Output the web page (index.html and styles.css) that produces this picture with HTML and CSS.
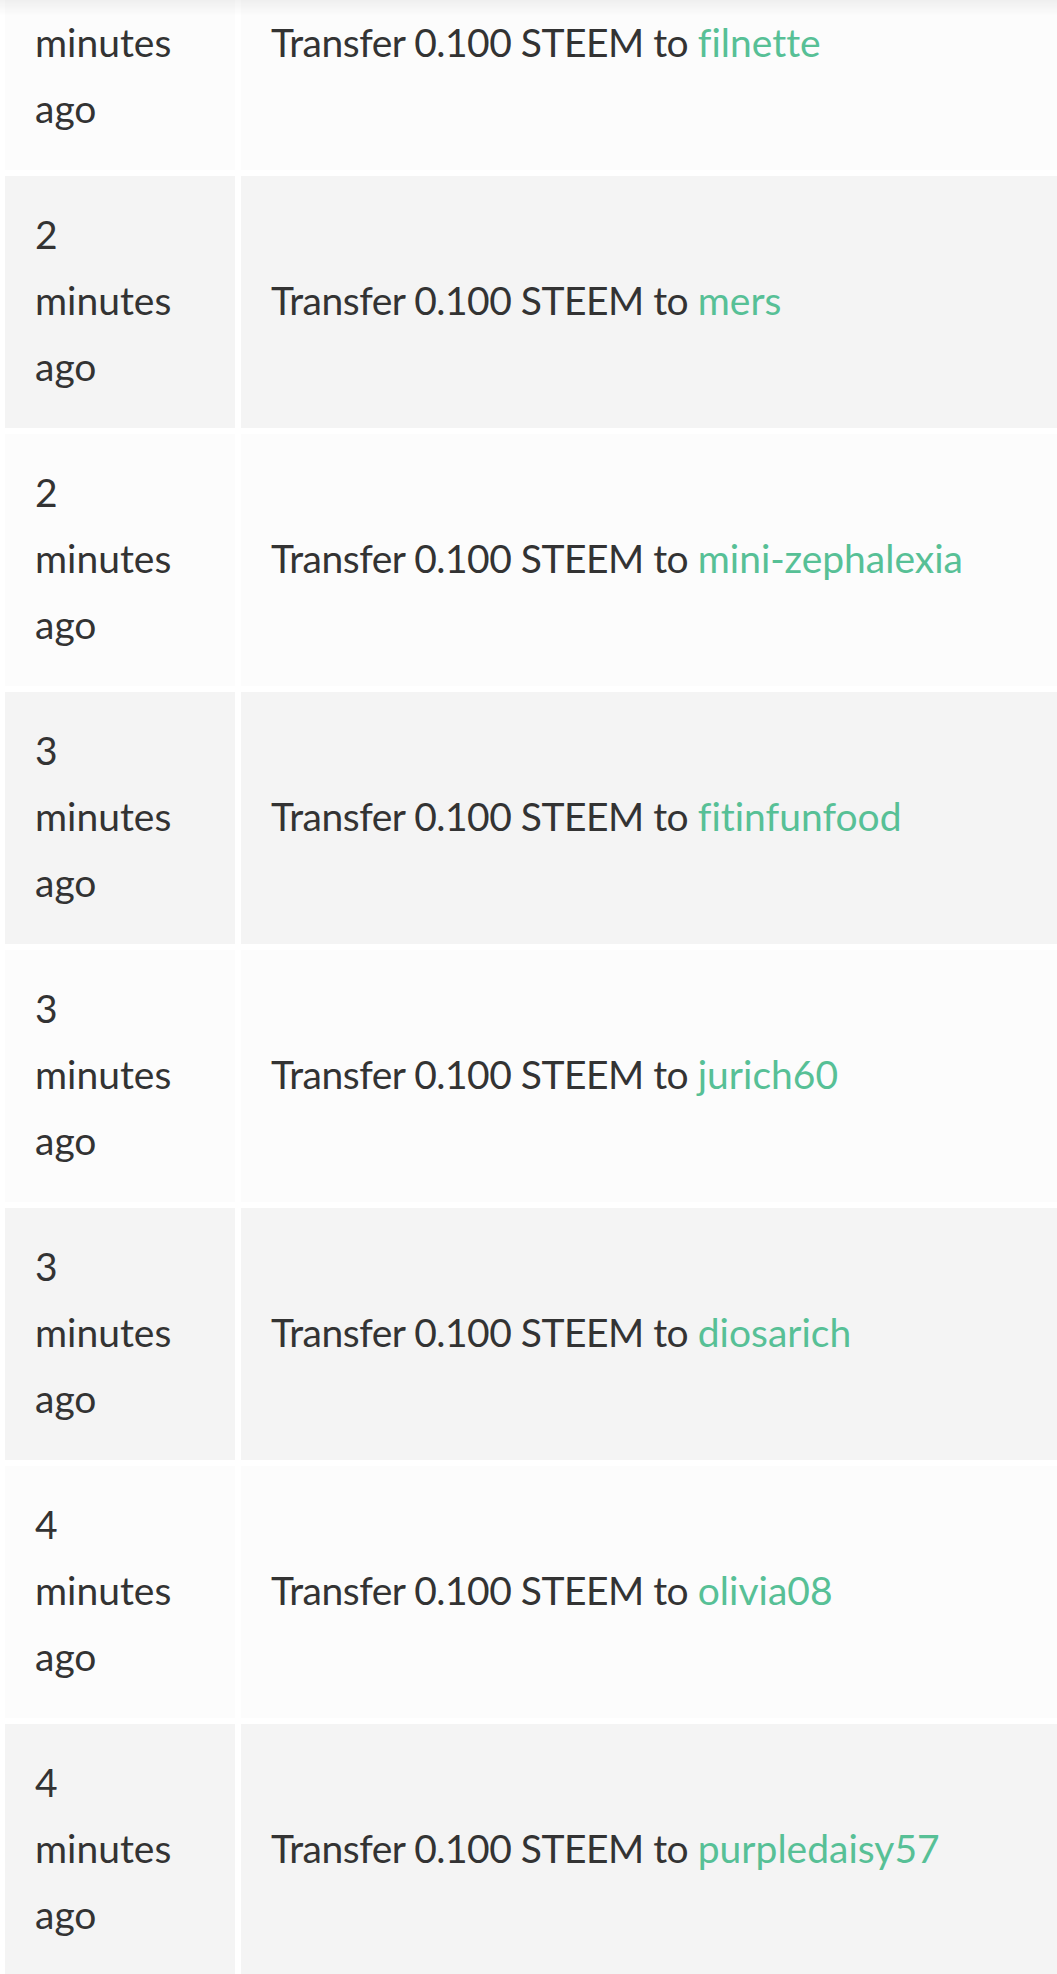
FILE: index.html
```html
<!DOCTYPE html>
<html lang="en">
<head>
    <meta charset="UTF-8">
    <meta name="viewport" content="width=device-width, initial-scale=1.0">
    <title>Transfer History</title>
    <link rel="stylesheet" href="styles.css">
</head>
<body>
    <div class="header-shadow"></div>
    <div class="history">
        <table class="transfers">
            <tbody>
                <tr>
                    <td class="time">1 minutes ago</td>
                    <td class="op">Transfer 0.100 STEEM to <a href="#">filnette</a></td>
                </tr>
                <tr>
                    <td class="time">2 minutes ago</td>
                    <td class="op">Transfer 0.100 STEEM to <a href="#">mers</a></td>
                </tr>
                <tr>
                    <td class="time">2 minutes ago</td>
                    <td class="op">Transfer 0.100 STEEM to <a href="#">mini-zephalexia</a></td>
                </tr>
                <tr>
                    <td class="time">3 minutes ago</td>
                    <td class="op">Transfer 0.100 STEEM to <a href="#">fitinfunfood</a></td>
                </tr>
                <tr>
                    <td class="time">3 minutes ago</td>
                    <td class="op">Transfer 0.100 STEEM to <a href="#">jurich60</a></td>
                </tr>
                <tr>
                    <td class="time">3 minutes ago</td>
                    <td class="op">Transfer 0.100 STEEM to <a href="#">diosarich</a></td>
                </tr>
                <tr>
                    <td class="time">4 minutes ago</td>
                    <td class="op">Transfer 0.100 STEEM to <a href="#">olivia08</a></td>
                </tr>
                <tr>
                    <td class="time">4 minutes ago</td>
                    <td class="op">Transfer 0.100 STEEM to <a href="#">purpledaisy57</a></td>
                </tr>
            </tbody>
        </table>
    </div>
</body>
</html>
```

FILE: styles.css
```css
:root {
    --text-color: #333;
    --link-color: #57c096;
    --row-odd: #fcfcfc;
    --row-even: #f4f4f4;
}

* {
    box-sizing: border-box;
    margin: 0;
    padding: 0;
}

html, body {
    background: #fff;
    overflow: hidden;
}

body {
    font-family: Lato, 'Open Sans', sans-serif;
    font-size: 39px;
    line-height: 66px;
    letter-spacing: -0.5px;
    font-variant-ligatures: none;
    color: var(--text-color);
}

/* shadow of the sticky header, sitting above the scrolled list */
.header-shadow {
    position: fixed;
    top: 0;
    left: 0;
    right: 0;
    height: 16px;
    background: linear-gradient(rgba(0, 0, 0, 0.05), rgba(0, 0, 0, 0));
    z-index: 2;
}

/* page is scrolled so the first row is cut off */
.history {
    margin-top: -88px;
    margin-left: -1px;
}

.transfers {
    width: 1100px;
    border-collapse: separate;
    border-spacing: 6px;
}

.transfers tr:nth-child(odd) td {
    background: var(--row-odd);
}

.transfers tr:nth-child(even) td {
    background: var(--row-even);
}

.transfers td {
    height: 252px;
    padding: 25px 30px 29px;
    vertical-align: middle;
}

.transfers td.time {
    width: 230px;
    padding-right: 50px;
    letter-spacing: 0;
}

.transfers a {
    color: var(--link-color);
    text-decoration: none;
    letter-spacing: 0;
}
```
